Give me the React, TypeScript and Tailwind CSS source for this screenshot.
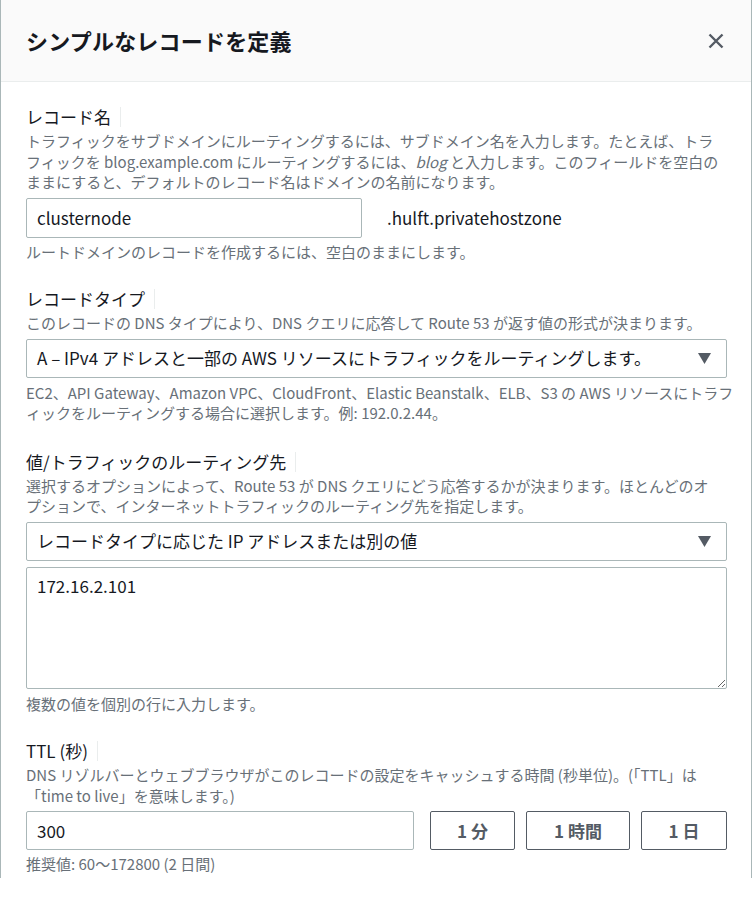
import React from "react";

const font = { fontFamily: '"Noto Sans CJK JP", "Noto Sans", sans-serif' };

function Label({ children }: { children: React.ReactNode }) {
  return (
    <div className="flex items-center h-[22px]">
      <span className="text-[17px] leading-[22px] text-[#16191f]">{children}</span>
      <span aria-hidden className="ml-[9px] h-[20px] border-l border-[#eaeded]" />
    </div>
  );
}

function Desc({ children, className = "" }: { children: React.ReactNode; className?: string }) {
  return <p className={`text-[15px] leading-[20.5px] text-[#687078] whitespace-nowrap ${className}`}>{children}</p>;
}

function Caret() {
  return (
    <svg width="13" height="11" viewBox="0 0 13 11" className="shrink-0">
      <polygon points="0,0 13,0 6.5,11" fill="#545b64" />
    </svg>
  );
}

function SelectBox({ value }: { value: string }) {
  return (
    <div className="mt-[5px] h-[39px] border border-[#aab7b8] rounded-[2px] flex items-center justify-between pl-[10px] pr-[15px]">
      <span className="text-[17px] text-[#16191f]">{value}</span>
      <Caret />
    </div>
  );
}

function PresetButton({ label, w }: { label: string; w: string }) {
  return (
    <button
      className={`${w} h-[39px] border border-[#545b64] rounded-[2px] text-[17px] font-bold text-[#545b64] bg-white`}
    >
      {label}
    </button>
  );
}

export default function App() {
  return (
    <div className="w-[752px] h-[910px] bg-white" style={font}>
      <div className="w-[752px] h-[878px] border-x border-[#aab7b8] overflow-hidden">
        {/* header */}
        <div className="h-[82px] bg-[#fafafa] border-b border-[#eaeded] flex items-center justify-between pl-[25px] pr-[27px]">
          <h2 className="text-[22px] font-bold text-[#16191f] tracking-[0.2px]">シンプルなレコードを定義</h2>
          <svg width="16" height="16" viewBox="0 0 16 16">
            <path d="M1.5 1.5l13 13M14.5 1.5l-13 13" stroke="#545b64" strokeWidth="2.4" />
          </svg>
        </div>

        <div className="pl-[25px] pr-[24px] pt-[24px]">
          {/* record name */}
          <Label>レコード名</Label>
          <Desc className="mt-[3px]">
            トラフィックをサブドメインにルーティングするには、サブドメイン名を入力します。たとえば、トラ
            <br />
            フィックを blog.example.com にルーティングするには、<i>blog</i> と入力します。このフィールドを空白の
            <br />
            ままにすると、デフォルトのレコード名はドメインの名前になります。
          </Desc>
          <div className="mt-[5px] flex items-center">
            <div className="w-[336px] h-[40px] border border-[#aab7b8] rounded-[2px] flex items-center pl-[10px]">
              <span className="text-[17px] text-[#16191f]">clusternode</span>
            </div>
            <span className="ml-[25px] text-[17px] text-[#16191f]">.hulft.privatehostzone</span>
          </div>
          <Desc className="mt-[4px]">ルートドメインのレコードを作成するには、空白のままにします。</Desc>

          {/* record type */}
          <div className="mt-[26px]">
            <Label>レコードタイプ</Label>
            <Desc className="mt-[3px]">
              このレコードの DNS タイプにより、DNS クエリに応答して Route 53 が返す値の形式が決まります。
            </Desc>
            <SelectBox value="A – IPv4 アドレスと一部の AWS リソースにトラフィックをルーティングします。" />
            <Desc className="mt-[5px]">
              EC2、API Gateway、Amazon VPC、CloudFront、Elastic Beanstalk、ELB、S3 の AWS リソースにトラフ
              <br />
              ィックをルーティングする場合に選択します。例: 192.0.2.44。
            </Desc>
          </div>

          {/* value */}
          <div className="mt-[27px]">
            <Label>値/トラフィックのルーティング先</Label>
            <Desc className="mt-[3px]">
              選択するオプションによって、Route 53 が DNS クエリにどう応答するかが決まります。ほとんどのオ
              <br />
              プションで、インターネットトラフィックのルーティング先を指定します。
            </Desc>
            <SelectBox value="レコードタイプに応じた IP アドレスまたは別の値" />
            <textarea
              defaultValue="172.16.2.101"
              className="mt-[6px] block w-full h-[122px] border border-[#aab7b8] rounded-[2px] px-[10px] py-[6px] text-[17px] leading-[24px] text-[#16191f] outline-none"
              style={font}
            />
            <Desc className="mt-[5px]">複数の値を個別の行に入力します。</Desc>
          </div>

          {/* ttl */}
          <div className="mt-[26px]">
            <Label>TTL (秒)</Label>
            <Desc className="mt-[3px]">
              DNS リゾルバーとウェブブラウザがこのレコードの設定をキャッシュする時間 (秒単位)。(「TTL」は
              <br />
              「time to live」を意味します。)
            </Desc>
            <div className="mt-[5px] flex items-center">
              <div className="w-[388px] h-[39px] border border-[#aab7b8] rounded-[2px] flex items-center pl-[10px]">
                <span className="text-[17px] text-[#16191f]">300</span>
              </div>
              <div className="ml-[16px] flex gap-[11px]">
                <PresetButton label="1 分" w="w-[85px]" />
                <PresetButton label="1 時間" w="w-[104px]" />
                <PresetButton label="1 日" w="w-[86px]" />
              </div>
            </div>
            <Desc className="mt-[4px]">推奨値: 60～172800 (2 日間)</Desc>
          </div>
        </div>
      </div>
    </div>
  );
}
